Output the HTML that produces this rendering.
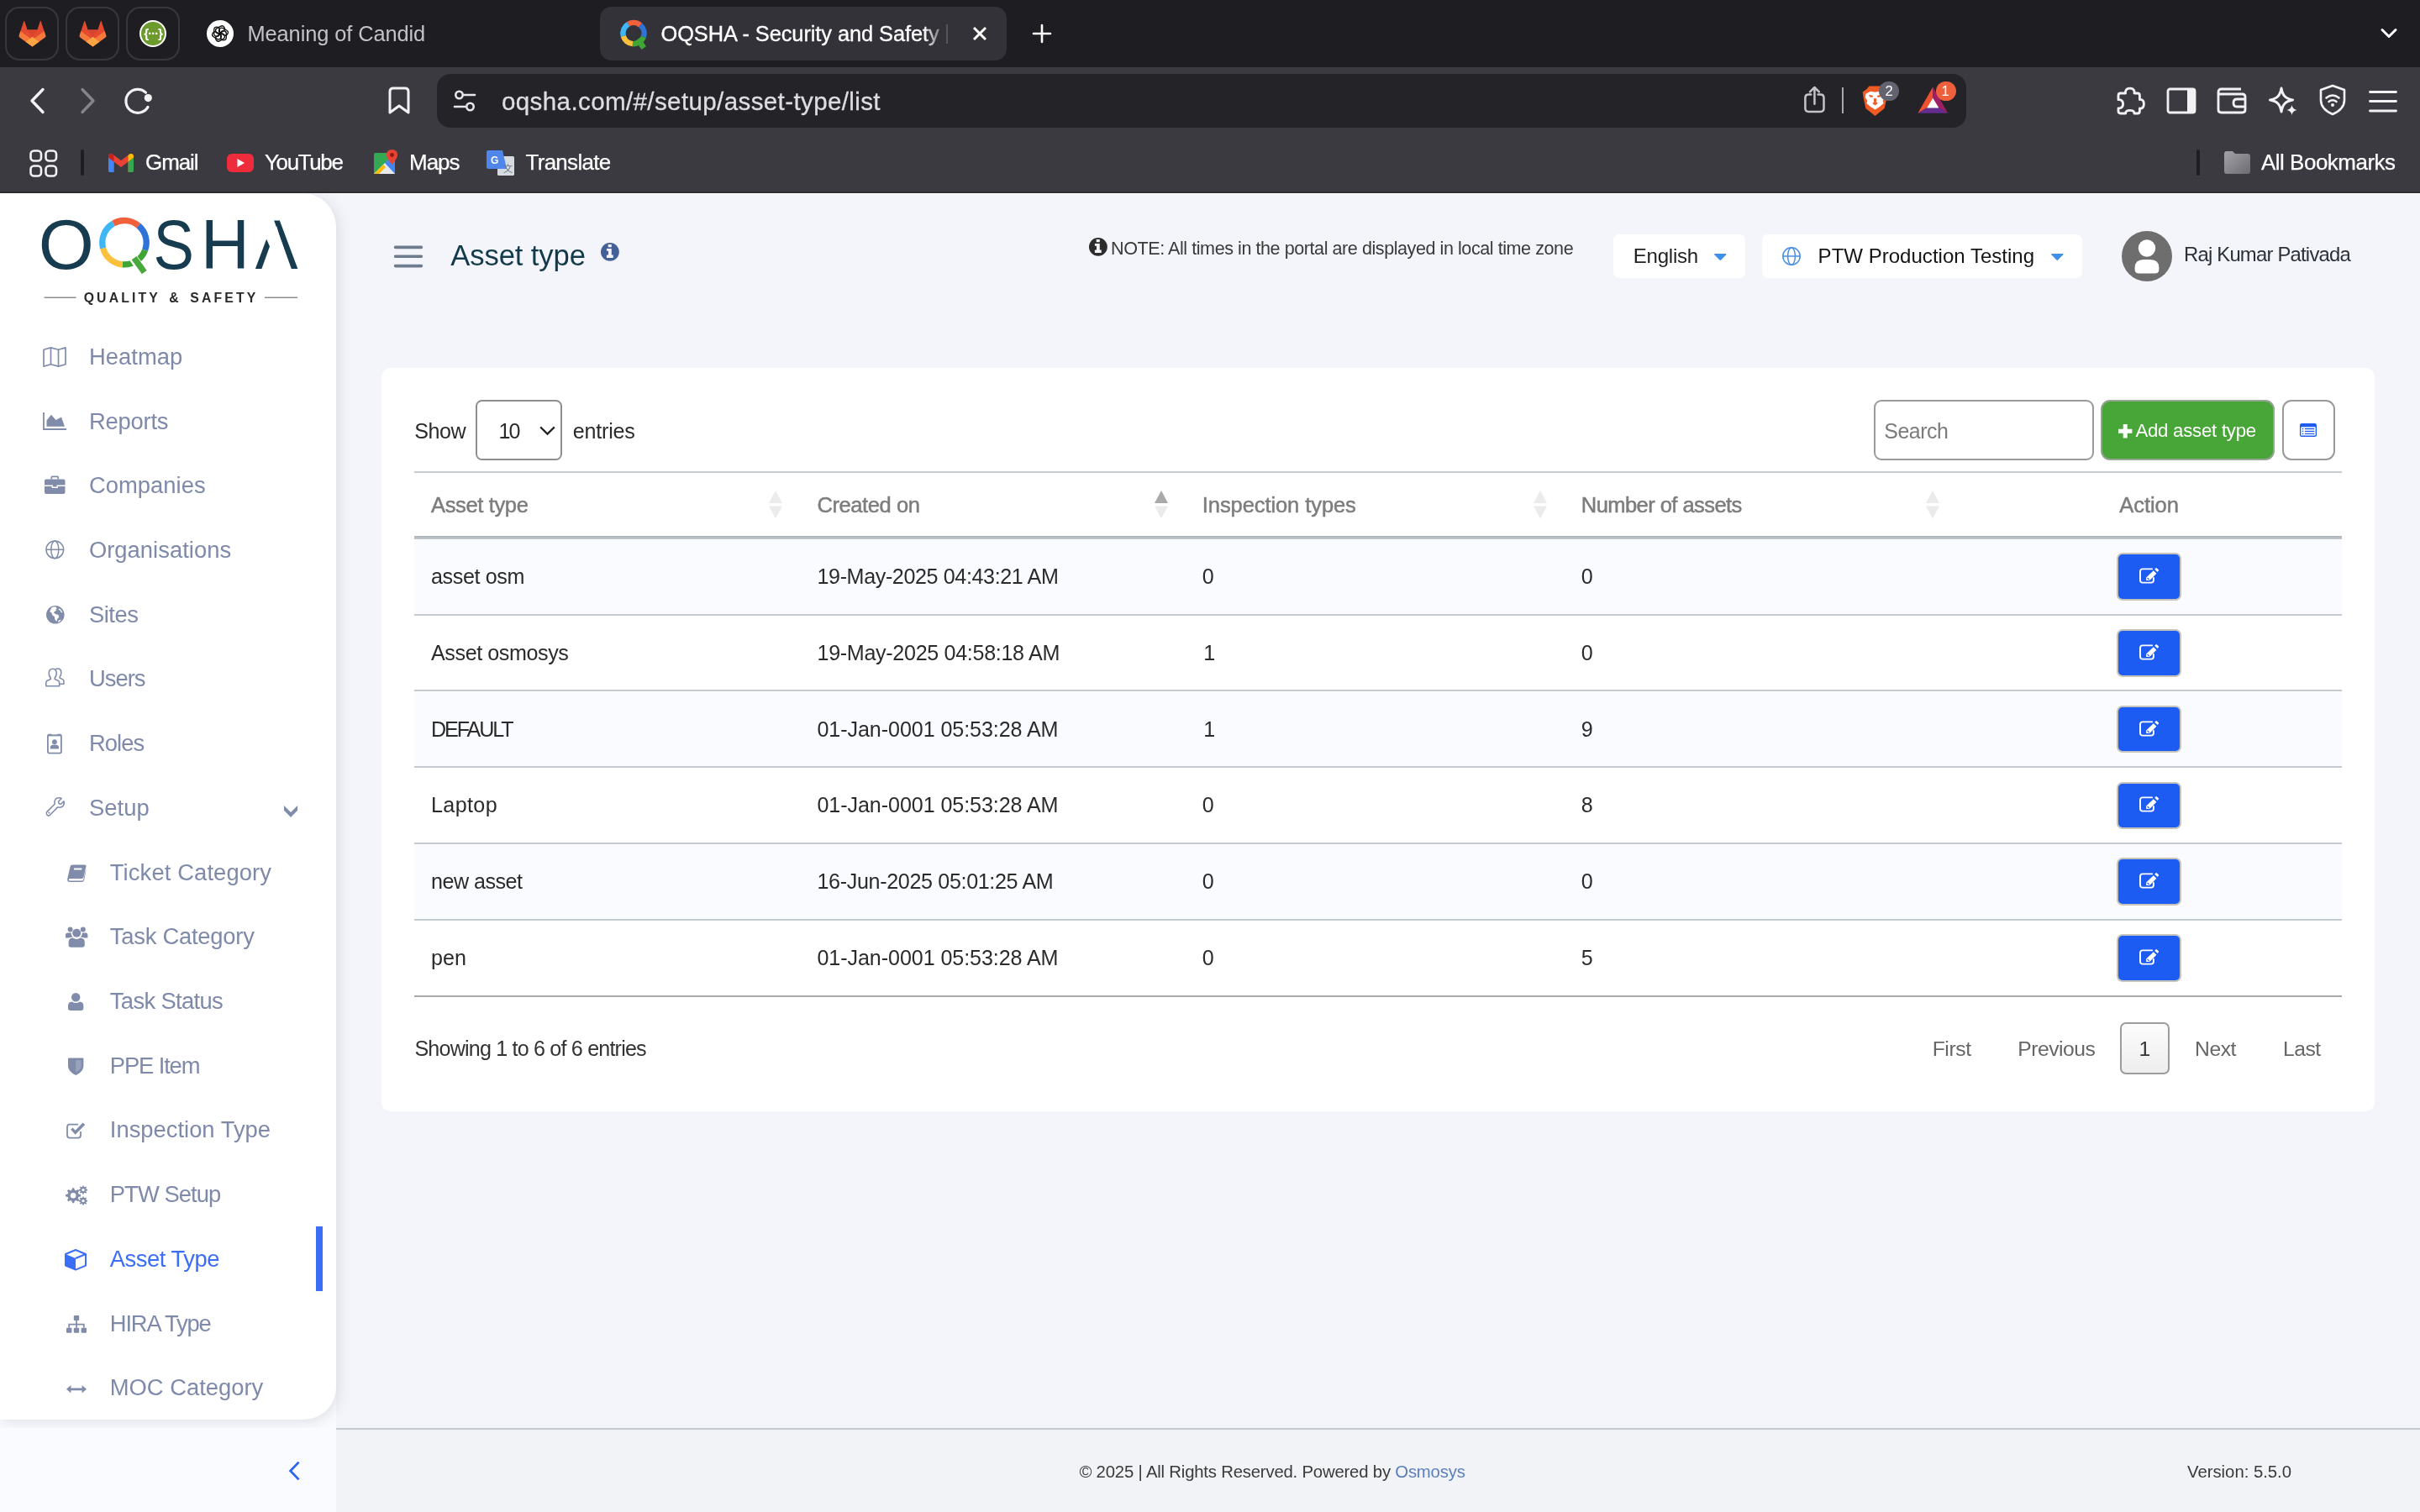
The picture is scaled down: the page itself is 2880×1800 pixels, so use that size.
<!DOCTYPE html>
<html lang="en"><head><meta charset="utf-8"><title>OQSHA - Security and Safety</title>
<style>
*{box-sizing:border-box;margin:0;padding:0}
html,body{width:2880px;height:1800px;overflow:hidden;background:#f4f5fa;font-family:"Liberation Sans",sans-serif}
.t{position:absolute;white-space:nowrap;display:block}
.a{position:absolute;display:block}
svg{position:absolute;display:block;overflow:visible}
#root{position:absolute;left:0;top:0;width:2880px;height:1800px;will-change:transform}

</style></head>
<body>
<div id="root">
<div class="a" style="left:0;top:0;width:2880px;height:80px;background:#1e1d22"></div>
<div class="a" style="left:0;top:80px;width:2880px;height:150px;background:#3b3a40"></div>
<div class="a" style="left:6px;top:8px;width:64px;height:64px;border:2px solid #38373d;border-radius:17px"></div>
<div class="a" style="left:78px;top:8px;width:64px;height:64px;border:2px solid #38373d;border-radius:17px"></div>
<div class="a" style="left:150px;top:8px;width:64px;height:64px;border:2px solid #38373d;border-radius:17px"></div>
<svg style="left:22px;top:24px" width="33" height="32" viewBox="0 0 33 32"><path d="M16.5 31.5 L1.2 20.2 Q0.3 19.4 0.7 18.2 L6.3 1.2 Q6.7 0.2 7.2 1.2 L10.6 11.6 H22.4 L25.8 1.2 Q26.3 0.2 26.7 1.2 L32.3 18.2 Q32.7 19.4 31.8 20.2 Z" fill="#e2492f"/><path d="M16.5 31.5 L1.2 20.2 Q0.3 19.4 0.7 18.2 L2.4 13 L16.5 23.6 L30.6 13 L32.3 18.2 Q32.7 19.4 31.8 20.2 Z" fill="#f5793a"/><path d="M16.5 31.5 L8.6 25.7 L16.5 19.8 L24.4 25.7 Z" fill="#fca542"/><path d="M10.6 11.6 H22.4 L16.5 19.8 Z" fill="#d8452f"/></svg>
<svg style="left:94px;top:24px" width="33" height="32" viewBox="0 0 33 32"><path d="M16.5 31.5 L1.2 20.2 Q0.3 19.4 0.7 18.2 L6.3 1.2 Q6.7 0.2 7.2 1.2 L10.6 11.6 H22.4 L25.8 1.2 Q26.3 0.2 26.7 1.2 L32.3 18.2 Q32.7 19.4 31.8 20.2 Z" fill="#e2492f"/><path d="M16.5 31.5 L1.2 20.2 Q0.3 19.4 0.7 18.2 L2.4 13 L16.5 23.6 L30.6 13 L32.3 18.2 Q32.7 19.4 31.8 20.2 Z" fill="#f5793a"/><path d="M16.5 31.5 L8.6 25.7 L16.5 19.8 L24.4 25.7 Z" fill="#fca542"/><path d="M10.6 11.6 H22.4 L16.5 19.8 Z" fill="#d8452f"/></svg>
<svg style="left:166px;top:24px" width="32" height="32" viewBox="0 0 32 32"><circle cx="16" cy="16" r="15" fill="#6d9a2d" stroke="#fff" stroke-width="2"/><text x="16" y="21.4" text-anchor="middle" font-family="Liberation Sans,sans-serif" font-size="15.5" font-weight="700" fill="#fff" letter-spacing="-1.2">{&#183;&#183;&#183;}</text></svg>
<svg style="left:246px;top:24px" width="32" height="32" viewBox="0 0 32 32"><circle cx="16" cy="16" r="16" fill="#fff"/><g fill="none" stroke="#111" stroke-width="1.35"><rect x="12.70" y="5.80" width="6.6" height="11.2" rx="3.3" transform="rotate(60 16.00 11.40)"/><rect x="16.68" y="8.10" width="6.6" height="11.2" rx="3.3" transform="rotate(120 19.98 13.70)"/><rect x="16.68" y="12.70" width="6.6" height="11.2" rx="3.3" transform="rotate(180 19.98 18.30)"/><rect x="12.70" y="15.00" width="6.6" height="11.2" rx="3.3" transform="rotate(240 16.00 20.60)"/><rect x="8.72" y="12.70" width="6.6" height="11.2" rx="3.3" transform="rotate(300 12.02 18.30)"/><rect x="8.72" y="8.10" width="6.6" height="11.2" rx="3.3" transform="rotate(360 12.02 13.70)"/></g></svg>
<span class="t" style="left:294.5px;top:22.0px;font-size:25.42px;line-height:36px;color:#c3c2c7;font-weight:400;letter-spacing:-0.10px;">Meaning of Candid</span>
<div class="a" style="left:714px;top:8px;width:484px;height:64px;border-radius:14px;background:#333238"></div>
<svg style="left:736px;top:22px" width="36" height="36" viewBox="0 0 36 36"><path d="M11.70 6.69 A12.60 12.60 0 0 1 26.10 7.95" fill="none" stroke="#f0603a" stroke-width="6.40"/><path d="M26.10 7.95 A12.60 12.60 0 0 1 29.84 21.91" fill="none" stroke="#2f72d8" stroke-width="6.40"/><path d="M29.84 21.91 A12.60 12.60 0 0 1 16.90 30.15" fill="none" stroke="#3fa535" stroke-width="6.40"/><path d="M16.90 30.15 A12.60 12.60 0 0 1 5.83 20.86" fill="none" stroke="#fbc13c" stroke-width="6.40"/><path d="M5.83 20.86 A12.60 12.60 0 0 1 11.70 6.69" fill="none" stroke="#3fb6f5" stroke-width="6.40"/><path d="M23.02 24.78 L30.27 35.13" stroke="#3fa535" stroke-width="6.72" fill="none"/></svg>
<span class="t" style="left:786.5px;top:22.0px;font-size:25.42px;line-height:36px;color:#ffffff;font-weight:400;-webkit-text-stroke:0.3px #fff;width:343px;overflow:hidden;-webkit-mask-image:linear-gradient(90deg,#000 312px,transparent 343px);letter-spacing:-0.08px;">OQSHA - Security and Safety</span>
<div class="a" style="left:1126px;top:29px;width:2px;height:23px;background:#56555b"></div>
<svg style="left:1157px;top:31px" width="18" height="18" viewBox="0 0 18 18"><path d="M2 2L16 16M16 2L2 16" stroke="#fff" stroke-width="3" fill="none"/></svg>
<svg style="left:1229px;top:29px" width="22" height="22" viewBox="0 0 22 22"><path d="M11 1V21M1 11H21" stroke="#fff" stroke-width="2.6" fill="none" stroke-linecap="round"/></svg>
<svg style="left:2833px;top:33px" width="20" height="14" viewBox="0 0 20 14"><path d="M2 2.5L10 10.5L18 2.5" stroke="#fff" stroke-width="3" fill="none" stroke-linecap="round" stroke-linejoin="round"/></svg>
<svg style="left:34px;top:103px" width="22" height="34" viewBox="0 0 22 34"><path d="M17 3.5L4 17L17 30.5" stroke="#f2f2f4" stroke-width="3.4" fill="none" stroke-linecap="round" stroke-linejoin="round"/></svg>
<svg style="left:93px;top:103px" width="22" height="34" viewBox="0 0 22 34"><path d="M5 3.5L18 17L5 30.5" stroke="#85848b" stroke-width="3.4" fill="none" stroke-linecap="round" stroke-linejoin="round"/></svg>
<svg style="left:146px;top:102px" width="36" height="36" viewBox="0 0 36 36"><path d="M27.5 8.2 A14 14 0 1 0 30 25.4" stroke="#f2f2f4" stroke-width="3.2" fill="none" stroke-linecap="round"/><circle cx="30.3" cy="14.6" r="4.6" fill="#f2f2f4"/></svg>
<svg style="left:461px;top:103px" width="28" height="34" viewBox="0 0 28 34"><path d="M3 6 Q3 2 7 2 H21 Q25 2 25 6 V31 L14 23 L3 31 Z" stroke="#f2f2f4" stroke-width="3" fill="none" stroke-linejoin="round"/></svg>
<div class="a" style="left:520px;top:88px;width:1820px;height:64px;border-radius:16px;background:#242328"></div>
<div class="a" style="left:0;top:228px;width:2880px;height:2px;background:#2d2c31"></div>
<svg style="left:539px;top:106px" width="28" height="28" viewBox="0 0 28 28"><g stroke="#e6e6ea" stroke-width="2.6" fill="none" stroke-linecap="round"><circle cx="7.5" cy="7" r="4.2"/><path d="M13 7H26"/><circle cx="20.5" cy="21" r="4.2"/><path d="M2 21H15"/></g></svg>
<span class="t" style="left:597.0px;top:99.8px;font-size:29.57px;line-height:41px;color:#dedde2;font-weight:400;-webkit-text-stroke:0.3px #dedde2;letter-spacing:0.37px;">oqsha.com/#/setup/asset-type/list</span>
<svg style="left:2147.3px;top:102.2px" width="25" height="32" viewBox="0 0 25 32"><g stroke="#c4c4c9" stroke-width="2.5" fill="none" stroke-linecap="round" stroke-linejoin="round"><path d="M8.3 10.4H5.3Q1.4 10.4 1.4 14.3V27Q1.4 30.9 5.3 30.9H19.6Q23.5 30.9 23.5 27V14.3Q23.5 10.4 19.6 10.4H16.6"/><path d="M12.45 21.8V2.2M7 7.4L12.45 2L17.9 7.4"/></g></svg>
<div class="a" style="left:2192px;top:104px;width:2px;height:31px;background:#a9a8ae"></div>
<svg style="left:2215.6px;top:102px" width="31" height="36" viewBox="0 0 31 36"><path d="M8.6 0.4H22.4L26 4.4L30.3 7.4L29.1 16L26.6 27L15.5 35.9L4.4 27L1.9 16L0.7 7.4L5 4.4Z" fill="#f15a22"/><path d="M4.6 9.6L10.4 6.7L15.5 7.7L20.6 6.7L26.4 9.6L27.2 14L24.6 18L25.6 21L21 25L15.5 28.6L10 25L5.4 21L6.4 18L3.8 14Z" fill="#fff"/><path d="M8.2 10.8L13.2 12L12.2 14L9 13.2ZM22.8 10.8L17.8 12L18.8 14L22 13.2ZM13.8 15.2H17.2L16.8 19.4L18.8 21L15.5 23.4L12.2 21L14.2 19.4Z" fill="#f15a22"/></svg>
<div class="a" style="left:2236.4px;top:96.6px;width:23.8px;height:23.8px;border-radius:12px;background:#62636f"></div>
<span class="t" style="left:2243.4px;top:97.1px;font-size:16.6px;line-height:23px;color:#fff;font-weight:400;">2</span>
<svg style="left:2281.5px;top:103px" width="36.6" height="32" viewBox="0 0 36.6 32"><path d="M18.3 0.4L0.4 31.8L18.3 21Z" fill="#f0502f"/><path d="M18.3 0.4L36.2 31.8L18.3 21Z" fill="#9e1f63"/><path d="M0.4 31.8H36.2L18.3 21Z" fill="#662d91"/><path d="M18.3 13.8L25.4 25.6H11.2Z" fill="#fff"/></svg>
<div class="a" style="left:2304px;top:96.6px;width:23.8px;height:23.8px;border-radius:12px;background:#ee5f3c"></div>
<span class="t" style="left:2310.6px;top:97.1px;font-size:16.6px;line-height:23px;color:#fff;font-weight:400;">1</span>
<svg style="left:2518px;top:102px" width="36" height="36" viewBox="0 0 36 36"><path d="M5.5 9H11.6C11.6 9 10.3 3.2 16.8 3.2C23.3 3.2 22 9 22 9H25.9Q28.4 9 28.4 11.5V16.6C28.4 16.6 33.4 15.3 33.4 21.8C33.4 28.3 28.4 27 28.4 27V30.5Q28.4 33 25.9 33H21.9C21.9 33 22.7 29.4 16.8 29.4C10.9 29.4 11.7 33 11.7 33H5.5Q3 33 3 30.5V26.9C3 26.9 8.6 27.7 8.6 21.8C8.6 15.9 3 16.7 3 16.7V11.5Q3 9 5.5 9Z" stroke="#f2f2f4" stroke-width="2.8" fill="none" stroke-linejoin="round"/></svg>
<svg style="left:2578px;top:104px" width="36" height="32" viewBox="0 0 36 32"><rect x="2" y="2" width="32" height="28" rx="2.6" stroke="#f2f2f4" stroke-width="2.8" fill="none"/><path d="M25 2H31.4Q34 2 34 4.6V27.4Q34 30 31.4 30H25Z" fill="#f2f2f4"/></svg>
<svg style="left:2638px;top:104px" width="36" height="32" viewBox="0 0 36 32"><g stroke="#f2f2f4" stroke-width="2.8" fill="none" stroke-linejoin="round"><path d="M2 8V26.5Q2 30 5.5 30H30.5Q34 30 34 26.5V11.5Q34 8 30.5 8H2V5.5Q2 2 5.5 2H29"/><path d="M34 14H24Q20 14 20 18.5Q20 23 24 23H34"/></g></svg>
<svg style="left:2699px;top:102px" width="36" height="36" viewBox="0 0 36 36"><path d="M16 3 C17.5 12 21 15.5 29.5 17 C21 18.5 17.5 22 16 31 C14.5 22 11 18.5 2.5 17 C11 15.5 14.5 12 16 3 Z" stroke="#f2f2f4" stroke-width="3" fill="none" stroke-linejoin="round"/><path d="M28.5 23 Q29.3 28 34.5 29 Q29.3 30 28.5 35 Q27.7 30 22.5 29 Q27.7 28 28.5 23 Z" fill="#f2f2f4"/></svg>
<svg style="left:2760px;top:100px" width="32" height="38" viewBox="0 0 32 38"><g stroke="#f2f2f4" stroke-width="2.6" fill="none" stroke-linecap="round" stroke-linejoin="round"><path d="M16 2 L30 7 V19 Q30 30 16 36 Q2 30 2 19 V7 Z"/><path d="M8.5 16.5 Q16 10.5 23.5 16.5"/><path d="M11.5 21 Q16 17.5 20.5 21"/></g><circle cx="16" cy="25" r="2" fill="#f2f2f4"/></svg>
<svg style="left:2819px;top:107px" width="34" height="28" viewBox="0 0 34 28"><path d="M1.5 2.5H32.5M1.5 13.5H32.5M1.5 25H32.5" stroke="#f2f2f4" stroke-width="2.8" stroke-linecap="round"/></svg>
<svg style="left:35px;top:178px" width="34" height="33" viewBox="0 0 34 33"><g stroke="#f2f2f4" stroke-width="2.6" fill="none"><rect x="1.5" y="1.5" width="12.5" height="12" rx="4"/><rect x="19.5" y="1.5" width="12.5" height="12" rx="4"/><rect x="1.5" y="19.5" width="12.5" height="12" rx="4"/><rect x="19.5" y="19.5" width="12.5" height="12" rx="4"/></g></svg>
<div class="a" style="left:96px;top:178px;width:4px;height:31px;border-radius:2px;background:#1e1d22"></div>
<svg style="left:129px;top:183px" width="30" height="22" viewBox="0 0 30 22"><path d="M0 3.5V20Q0 22 2 22H6.5V9.5L15 16L23.5 9.5V22H28Q30 22 30 20V3.5Q30 0 26.8 0Q25.6 0 24.5 1L15 8L5.5 1Q4.4 0 3.2 0Q0 0 0 3.5Z" fill="#ea4335"/><path d="M0 3.5V20Q0 22 2 22H6.5V9.5L0 4.5Z" fill="#4285f4"/><path d="M23.5 9.5V22H28Q30 22 30 20V4.5Z" fill="#34a853"/><path d="M23.5 2V9.5L30 4.5V3.5Q30 0 26.8 0Q25.6 0 24.5 1Z" fill="#fbbc04"/><path d="M0 3.5V4.5L6.5 9.5V2L5.5 1Q4.4 0 3.2 0Q0 0 0 3.5Z" fill="#c5221f"/></svg>
<span class="t" style="left:173.0px;top:175.0px;font-size:25.94px;line-height:36px;color:#fff;font-weight:400;-webkit-text-stroke:0.25px #fff;letter-spacing:-1.05px;">Gmail</span>
<svg style="left:270px;top:183px" width="32" height="22" viewBox="0 0 32 22"><rect width="32" height="22" rx="6" fill="#ee2c3c"/><path d="M12.5 6L21 11L12.5 16Z" fill="#fff"/></svg>
<span class="t" style="left:315.0px;top:175.0px;font-size:25.94px;line-height:36px;color:#fff;font-weight:400;-webkit-text-stroke:0.25px #fff;letter-spacing:-1.35px;">YouTube</span>
<svg style="left:444px;top:178px" width="30" height="30" viewBox="0 0 30 30"><rect x="1" y="4" width="25" height="25" rx="2" fill="#34a853"/><path d="M1 29L26 4V29Z" fill="#4285f4"/><path d="M1 29 L14 16 L26 29 Z" fill="#e8eaed"/><path d="M1 29L12 18L15 21L7 29Z" fill="#fbbc04"/><path d="M26 4V29H24L12 17Z" fill="#c9d3e8" opacity=".0"/><path d="M22.5 0Q29 0.3 29 6.5Q29 10.5 22.5 18Q16 10.5 16 6.5Q16 0.3 22.5 0Z" fill="#ea4335"/><circle cx="22.5" cy="6.5" r="2.4" fill="#8b1a12"/></svg>
<span class="t" style="left:487.0px;top:175.0px;font-size:25.94px;line-height:36px;color:#fff;font-weight:400;-webkit-text-stroke:0.25px #fff;letter-spacing:-0.98px;">Maps</span>
<svg style="left:579px;top:178px" width="34" height="32" viewBox="0 0 34 32"><rect x="13" y="8" width="20" height="23" rx="1.5" fill="#d6dae1"/><path d="M2 1H19L24 23H2Q0 23 0 21V3Q0 1 2 1Z" fill="#4f86ec"/><text x="5" y="17" font-family="Liberation Sans,sans-serif" font-weight="700" font-size="12" fill="#fff">G</text><text x="20" y="27" font-family="Liberation Sans,Noto Sans CJK SC,sans-serif" font-size="11" fill="#6b7280">文</text></svg>
<span class="t" style="left:625.5px;top:175.0px;font-size:25.94px;line-height:36px;color:#fff;font-weight:400;-webkit-text-stroke:0.25px #fff;letter-spacing:-0.69px;">Translate</span>
<div class="a" style="left:2614px;top:178px;width:4px;height:31px;border-radius:2px;background:#1e1d22"></div>
<svg style="left:2647px;top:180px" width="31" height="27" viewBox="0 0 31 27"><defs><linearGradient id="fg" x1="0" y1="0" x2="1" y2="1"><stop offset="0" stop-color="#a3a3a8"/><stop offset="1" stop-color="#6b6b71"/></linearGradient></defs><path d="M0 3Q0 0 3 0H10L13 3H28Q31 3 31 6V24Q31 27 28 27H3Q0 27 0 24Z" fill="url(#fg)"/></svg>
<span class="t" style="left:2691.0px;top:175.0px;font-size:25.94px;line-height:36px;color:#fff;font-weight:400;-webkit-text-stroke:0.25px #fff;letter-spacing:-0.48px;">All Bookmarks</span>
<div class="a" style="left:400px;top:1702px;width:2480px;height:98px;background:#f2f3f6"></div>
<div class="a" style="left:0;top:1640px;width:400px;height:160px;background:#fafbfe"></div>
<div class="a" style="left:366px;top:229.5px;width:2514px;height:1.6px;background:rgba(255,255,255,.85)"></div>
<div class="a" style="left:0;top:230px;width:400px;height:1460px;background:#fff;border-radius:0 40px 38px 0;box-shadow:2px 3px 16px rgba(80,88,110,.17);clip-path:inset(0 -80px -80px 0)"></div>
<div class="a" style="left:0;top:1700px;width:400px;height:100px;background:#fafbfe"></div>
<svg style="left:0;top:230px" width="400" height="150" viewBox="0 230 400 150"><g font-family="Liberation Sans,sans-serif" font-size="82.5" fill="#173b4f" text-anchor="middle"><text x="78.8" y="319.9" transform="translate(78.8 0) scale(1.03 1) translate(-78.8 0)">O</text><text x="206.8" y="319.9" transform="translate(206.8 0) scale(0.88 1) translate(-206.8 0)">S</text><text x="267.8" y="320" transform="translate(267.8 320) scale(0.97 1.01) translate(-267.8 -320)">H</text><text x="329.2" y="320" transform="translate(329.2 320) scale(0.93 1.01) translate(-329.2 -320)">&#923;</text></g><path d="M300 258 L324.6 258 L338.5 298 L323 298 L315.5 281 L300 281 Z" fill="#fff"/><path d="M134.90 266.01 A26.20 26.20 0 0 1 164.84 268.63" fill="none" stroke="#f0603a" stroke-width="7.30"/><path d="M164.84 268.63 A26.20 26.20 0 0 1 172.62 297.66" fill="none" stroke="#2f72d8" stroke-width="7.30"/><path d="M172.62 297.66 A26.20 26.20 0 0 1 145.72 314.80" fill="none" stroke="#3fa535" stroke-width="7.30"/><path d="M145.72 314.80 A26.20 26.20 0 0 1 122.69 295.48" fill="none" stroke="#fbc13c" stroke-width="7.30"/><path d="M122.69 295.48 A26.20 26.20 0 0 1 134.90 266.01" fill="none" stroke="#3fb6f5" stroke-width="7.30"/><path d="M158.8 307.5 L171.4 324.6" stroke="#fff" stroke-width="10.5" fill="none"/><path d="M159.6 307.2 L171.8 324.2" stroke="#48a83b" stroke-width="7.2" fill="none"/><path d="M52.5 354.3H90.5M315 354.3H354" stroke="#8d8d8d" stroke-width="1.6"/></svg>
<span class="t" style="left:99.7px;top:343.6px;font-size:15.77px;line-height:22px;color:#2a2a2a;font-weight:700;word-spacing:3px;letter-spacing:3.15px;">QUALITY &amp; SAFETY</span>
<span class="t" style="left:105.9px;top:405.8px;font-size:27.39px;line-height:38px;color:#7f8aab;font-weight:400;letter-spacing:0.05px;">Heatmap</span>
<span class="t" style="left:105.9px;top:482.5px;font-size:27.39px;line-height:38px;color:#7f8aab;font-weight:400;letter-spacing:-0.21px;">Reports</span>
<span class="t" style="left:105.9px;top:559.2px;font-size:27.39px;line-height:38px;color:#7f8aab;font-weight:400;letter-spacing:0.04px;">Companies</span>
<span class="t" style="left:105.9px;top:635.9px;font-size:27.39px;line-height:38px;color:#7f8aab;font-weight:400;letter-spacing:0.03px;">Organisations</span>
<span class="t" style="left:105.9px;top:712.6px;font-size:27.39px;line-height:38px;color:#7f8aab;font-weight:400;letter-spacing:-0.43px;">Sites</span>
<span class="t" style="left:105.9px;top:789.3px;font-size:27.39px;line-height:38px;color:#7f8aab;font-weight:400;letter-spacing:-0.96px;">Users</span>
<span class="t" style="left:105.9px;top:866.1px;font-size:27.39px;line-height:38px;color:#7f8aab;font-weight:400;letter-spacing:-0.94px;">Roles</span>
<span class="t" style="left:105.9px;top:942.8px;font-size:27.39px;line-height:38px;color:#7f8aab;font-weight:400;letter-spacing:0.09px;">Setup</span>
<span class="t" style="left:130.8px;top:1019.5px;font-size:27.39px;line-height:38px;color:#7f8aab;font-weight:400;letter-spacing:0.11px;">Ticket Category</span>
<span class="t" style="left:130.8px;top:1096.2px;font-size:27.39px;line-height:38px;color:#7f8aab;font-weight:400;letter-spacing:-0.24px;">Task Category</span>
<span class="t" style="left:130.8px;top:1173.0px;font-size:27.39px;line-height:38px;color:#7f8aab;font-weight:400;letter-spacing:-0.65px;">Task Status</span>
<span class="t" style="left:130.8px;top:1249.7px;font-size:27.39px;line-height:38px;color:#7f8aab;font-weight:400;letter-spacing:-1.13px;">PPE Item</span>
<span class="t" style="left:130.8px;top:1326.4px;font-size:27.39px;line-height:38px;color:#7f8aab;font-weight:400;letter-spacing:-0.00px;">Inspection Type</span>
<span class="t" style="left:130.8px;top:1403.1px;font-size:27.39px;line-height:38px;color:#7f8aab;font-weight:400;letter-spacing:-0.95px;">PTW Setup</span>
<span class="t" style="left:130.8px;top:1479.8px;font-size:27.39px;line-height:38px;color:#3b6ef5;font-weight:400;letter-spacing:-0.48px;">Asset Type</span>
<span class="t" style="left:130.8px;top:1556.5px;font-size:27.39px;line-height:38px;color:#7f8aab;font-weight:400;letter-spacing:-1.17px;">HIRA Type</span>
<span class="t" style="left:130.8px;top:1633.3px;font-size:27.39px;line-height:38px;color:#7f8aab;font-weight:400;letter-spacing:-0.01px;">MOC Category</span>
<svg style="left:51.0px;top:413.2px" width="28.0" height="24.0" viewBox="0 0 28 24"><g fill="none" stroke="#818cab" stroke-width="1.7" stroke-linejoin="round"><path d="M1 3.2L9.5 0.9L18.5 3.2L27 0.9V20.8L18.5 23.1L9.5 20.8L1 23.1Z"/><path d="M9.5 0.9V20.8M18.5 3.2V23.1"/></g></svg>
<svg style="left:51.0px;top:491.4px" width="28.0" height="21.0" viewBox="0 0 28 21"><path d="M1 0V20H28" fill="none" stroke="#818cab" stroke-width="1.8"/><path d="M4.5 16.8V9.5L10 2.8L15.5 9L22 5.5L26 16.8Z" fill="#818cab"/></svg>
<svg style="left:53.0px;top:567.3px" width="24.5" height="21.0" viewBox="0 0 24.5 21"><path d="M8.3 3.6V1.2Q8.3 0.4 9.1 0.4H15.4Q16.2 0.4 16.2 1.2V3.6" fill="none" stroke="#818cab" stroke-width="1.7"/><path d="M0 5.6Q0 3.6 2 3.6H22.5Q24.5 3.6 24.5 5.6V10.6H14.6V12.6H9.9V10.6H0Z" fill="#818cab"/><path d="M0 12H8.6V14H15.9V12H24.5V19Q24.5 21 22.5 21H2Q0 21 0 19Z" fill="#818cab"/></svg>
<svg style="left:54.0px;top:642.6px" width="22.6" height="22.6" viewBox="0 0 24 24"><g fill="none" stroke="#818cab" stroke-width="1.6"><circle cx="12" cy="12" r="11"/><ellipse cx="12" cy="12" rx="4.8" ry="11"/><path d="M1 12H23"/></g></svg>
<svg style="left:54.5px;top:721.3px" width="21.6" height="21.6" viewBox="0 0 21.6 21.6"><circle cx="10.8" cy="10.8" r="10.8" fill="#818cab"/><path d="M6.2 2.6Q8.5 1.2 11.4 1.4L13 3.4L11.2 4.2L12.4 6L10.2 6.4L9 8.6L11.5 10.2L14.2 10.8L15.4 13.4L13 16.2L12.2 19.2L10.2 16L9.8 13L7.4 11.4L6.4 8.6L4.2 7.2Z M15.5 3.2Q18.6 5 19.6 8.2L17.6 8L16.6 5.6L14.6 5Z M14.6 17.6L18.2 16.6Q16.6 19.2 14 20Z" fill="#fff"/></svg>
<svg style="left:54.0px;top:795.4px" width="22.8" height="23.0" viewBox="0 0 23.5 23.2"><g fill="none" stroke="#818cab" stroke-width="1.6" stroke-linejoin="round"><path d="M9 1Q13.6 1 13.6 6.2Q13.6 10.4 11.6 12V13.6L15.6 15.4Q17.2 16.2 17.2 18.2V22.2H0.8V18.2Q0.8 16.2 2.4 15.4L6.4 13.6V12Q4.4 10.4 4.4 6.2Q4.4 1 9 1Z"/><path d="M12.4 1.6Q13.6 0.8 15 0.8Q19.4 0.8 19.4 5.6Q19.4 9.2 17.6 10.8V12.2L21 13.8Q22.6 14.6 22.6 16.4V19.6H17.4"/></g></svg>
<svg style="left:56.2px;top:873.1px" width="17.8" height="24.6" viewBox="0 0 17.8 24.6"><rect x="0.9" y="1.6" width="16" height="22" rx="1.8" fill="none" stroke="#818cab" stroke-width="1.8"/><path d="M0.9 1.2H16.9V3.4H0.9Z" fill="#818cab"/><path d="M5.6 0H12.2V1.4H5.6Z" fill="#fff"/><circle cx="8.9" cy="10.2" r="2.9" fill="#818cab"/><path d="M3.8 18.6V16.6Q3.8 13.6 8.9 13.6Q14 13.6 14 16.6V18.6Z" fill="#818cab"/></svg>
<svg style="left:53.8px;top:948.8px" width="23.0" height="23.0" viewBox="0 0 24 24"><path d="M14.2 1.2Q17.4 0.2 20 1.6L16.2 5.4L16.8 8L19.4 8.6L23 5Q24 8 22.2 10.6Q19.6 13.6 15.4 12.4L5.6 22.2Q3.8 23.6 2 22Q0.4 20.2 1.8 18.4L11.6 8.6Q10.6 3.6 14.2 1.2Z" fill="none" stroke="#818cab" stroke-width="1.6" stroke-linejoin="round"/><circle cx="4.6" cy="19.4" r="1.1" fill="#818cab"/></svg>
<svg style="left:338.0px;top:959.0px" width="16.2" height="14.0" viewBox="0 0 16.2 14"><path d="M0 0L8.05 8L16.1 0V5.8L8.05 13.9L0 5.8Z" fill="#818cab"/></svg>
<svg style="left:79.5px;top:1029.2px" width="23.0" height="21.2" viewBox="0 0 23 21.2"><path d="M6.2 0.4H20.6Q23 0.4 22.4 2.8L19.4 15.6Q19 17 17.4 17H3Q1.6 17.2 1.8 18.4Q2 19.4 3.2 19.4H17.6Q18.8 19.4 19.2 18.2L22.4 5.6L22.2 8.6L20.2 18.6Q19.8 21 17.6 21H3Q0 21 0.2 17.8Q0.2 16.8 0.6 15.4L3.6 2.6Q4 0.4 6.2 0.4Z" fill="#818cab"/><path d="M8.2 4.6H17.6L17.2 6.4H7.8Z" fill="#fff"/></svg>
<svg style="left:77.8px;top:1103.3px" width="26.4" height="24.8" viewBox="0 0 26.4 24.8"><g fill="#818cab"><circle cx="5.6" cy="3.6" r="3"/><circle cx="20.8" cy="3.6" r="3"/><circle cx="13.2" cy="7.8" r="5"/><path d="M0 13.4V9.8Q0 7.6 2.2 7.4H6.6Q6.4 10.6 8.4 12.6Q5 13 4 13.4Z"/><path d="M26.4 13.4V9.8Q26.4 7.6 24.2 7.4H19.8Q20 10.6 18 12.6Q21.4 13 22.4 13.4Z"/><path d="M3.6 21.8V18.8Q3.6 13.8 8.6 13.6Q10.6 15 13.2 15Q15.8 15 17.8 13.6Q22.8 13.8 22.8 18.8V21.8Q22.8 24.8 19.8 24.8H6.6Q3.6 24.8 3.6 21.8Z"/></g></svg>
<svg style="left:81.4px;top:1181.8px" width="18.4" height="21.0" viewBox="0 0 18.4 21"><g fill="#818cab"><circle cx="9.2" cy="5.2" r="5.2"/><path d="M0 18V15.4Q0 10.6 4.6 10.4Q6.6 12 9.2 12Q11.8 12 13.8 10.4Q18.4 10.6 18.4 15.4V18Q18.4 21 15.4 21H3Q0 21 0 18Z"/></g></svg>
<svg style="left:81.4px;top:1258.7px" width="18.4" height="21.0" viewBox="0 0 18.4 21"><path d="M0.6 0.4H17.8Q18.4 0.4 18.4 1V10.2Q18.4 16.6 9.2 21Q0 16.6 0 10.2V1Q0 0.4 0.6 0.4Z" fill="#818cab"/><path d="M9.2 3.2H15.6V10.2Q15.6 14.4 9.2 17.8Z" fill="#98a2bd"/></svg>
<svg style="left:79.4px;top:1336.0px" width="22.6" height="19.6" viewBox="0 0 22.6 19.6"><path d="M17 11V15.6Q17 18.6 14 18.6H4Q1 18.6 1 15.6V5.6Q1 2.6 4 2.6H14" fill="none" stroke="#818cab" stroke-width="1.8"/><path d="M5.2 8.8L7.6 6.6L10.6 9.8L19.6 0.6L22.2 3L10.6 14.8Z" fill="#818cab"/></svg>
<svg style="left:77.8px;top:1411.0px" width="26.4" height="24.4" viewBox="0 0 26.4 24.4"><path d="M18.15 11.24 L18.15 13.16 L15.43 14.07 L14.90 15.36 L16.18 17.92 L14.82 19.28 L12.26 18.00 L10.97 18.53 L10.06 21.25 L8.14 21.25 L7.23 18.53 L5.94 18.00 L3.38 19.28 L2.02 17.92 L3.30 15.36 L2.77 14.07 L0.05 13.16 L0.05 11.24 L2.77 10.33 L3.30 9.04 L2.02 6.48 L3.38 5.12 L5.94 6.40 L7.23 5.87 L8.14 3.15 L10.06 3.15 L10.97 5.87 L12.26 6.40 L14.82 5.12 L16.18 6.48 L14.90 9.04 L15.43 10.33Z M5.80 12.20 a3.30 3.30 0 1 0 6.60 0 a3.30 3.30 0 1 0 -6.60 0Z" fill="#818cab" fill-rule="evenodd"/><path d="M26.17 5.05 L26.17 6.15 L24.55 6.65 L24.25 7.37 L25.05 8.87 L24.27 9.65 L22.77 8.85 L22.05 9.15 L21.55 10.77 L20.45 10.77 L19.95 9.15 L19.23 8.85 L17.73 9.65 L16.95 8.87 L17.75 7.37 L17.45 6.65 L15.83 6.15 L15.83 5.05 L17.45 4.55 L17.75 3.83 L16.95 2.33 L17.73 1.55 L19.23 2.35 L19.95 2.05 L20.45 0.43 L21.55 0.43 L22.05 2.05 L22.77 2.35 L24.27 1.55 L25.05 2.33 L24.25 3.83 L24.55 4.55Z M19.30 5.60 a1.70 1.70 0 1 0 3.40 0 a1.70 1.70 0 1 0 -3.40 0Z" fill="#818cab" fill-rule="evenodd"/><path d="M26.17 18.05 L26.17 19.15 L24.55 19.65 L24.25 20.37 L25.05 21.87 L24.27 22.65 L22.77 21.85 L22.05 22.15 L21.55 23.77 L20.45 23.77 L19.95 22.15 L19.23 21.85 L17.73 22.65 L16.95 21.87 L17.75 20.37 L17.45 19.65 L15.83 19.15 L15.83 18.05 L17.45 17.55 L17.75 16.83 L16.95 15.33 L17.73 14.55 L19.23 15.35 L19.95 15.05 L20.45 13.43 L21.55 13.43 L22.05 15.05 L22.77 15.35 L24.27 14.55 L25.05 15.33 L24.25 16.83 L24.55 17.55Z M19.30 18.60 a1.70 1.70 0 1 0 3.40 0 a1.70 1.70 0 1 0 -3.40 0Z" fill="#818cab" fill-rule="evenodd"/></svg>
<svg style="left:76.8px;top:1486.5px" width="26.0" height="25.6" viewBox="0 0 26 25.6"><path d="M13 1L25 6V19.6L13 24.6L1 19.6V6Z" fill="none" stroke="#3b6ef5" stroke-width="2" stroke-linejoin="round"/><path d="M1 6L13 11V24.6L1 19.6Z" fill="#3b6ef5"/><path d="M13 11L25 6" stroke="#3b6ef5" stroke-width="2"/></svg>
<div class="a" style="left:376px;top:1460px;width:8px;height:77px;background:#3b6ef5"></div>
<svg style="left:78.8px;top:1565.6px" width="24.0" height="20.8" viewBox="0 0 24 20.8"><g fill="#818cab"><rect x="8.8" y="0" width="6.4" height="6" rx="1"/><rect x="0" y="14.8" width="6.4" height="6" rx="1"/><rect x="8.8" y="14.8" width="6.4" height="6" rx="1"/><rect x="17.6" y="14.8" width="6.4" height="6" rx="1"/></g><path d="M12 6V14.8M3.2 14.8V10.6H20.8V14.8" fill="none" stroke="#818cab" stroke-width="1.7"/></svg>
<svg style="left:78.8px;top:1648.9px" width="24.0" height="9.6" viewBox="0 0 24 9.6"><path d="M0 4.8L5.4 0V3.4H18.6V0L24 4.8L18.6 9.6V6.2H5.4V9.6Z" fill="#818cab"/></svg>
<svg style="left:342.5px;top:1738.5px" width="15.0" height="24.0" viewBox="0 0 15 24"><path d="M12.6 1.6L2.6 12L12.6 22.4" fill="none" stroke="#2d64f1" stroke-width="2.8" stroke-linejoin="miter"/></svg>
<svg style="left:467.0px;top:291.5px" width="38.0" height="27.0" viewBox="0 0 38 27"><path d="M3.6 2.4H34.4M3.6 13.3H34.4M3.6 24.6H34.4" stroke="#6e7b8d" stroke-width="3.6" stroke-linecap="round"/></svg>
<span class="t" style="left:536.3px;top:279.9px;font-size:34.66px;line-height:49px;color:#133a4a;font-weight:400;letter-spacing:-0.13px;">Asset type</span>
<svg style="left:715.1px;top:289.1px" width="21.8" height="21.8" viewBox="0 0 22 22"><circle cx="11" cy="11" r="11" fill="#436098"/><path d="M8.8 2H12.9V5.4H8.8ZM7 7H12.9V14.7H14.9V18.1H7V14.7H9.1V9.9H7Z" fill="#f4f5fa"/></svg>
<svg style="left:1295.5px;top:282.9px" width="21.8" height="21.8" viewBox="0 0 22 22"><circle cx="11" cy="11" r="11" fill="#2d2d2d"/><path d="M8.8 2H12.9V5.4H8.8ZM7 7H12.9V14.7H14.9V18.1H7V14.7H9.1V9.9H7Z" fill="#f4f5fa"/></svg>
<span class="t" style="left:1322.0px;top:280.6px;font-size:21.58px;line-height:30px;color:#3a3a3a;font-weight:400;letter-spacing:-0.45px;">NOTE: All times in the portal are displayed in local time zone</span>
<div class="a" style="left:1920px;top:279px;width:157px;height:51.5px;border-radius:7px;background:#fff"></div>
<span class="t" style="left:1943.8px;top:288.3px;font-size:24.07px;line-height:34px;color:#222;font-weight:400;letter-spacing:-0.27px;">English</span>
<svg style="left:2040.0px;top:301.6px" width="14.6" height="8.2" viewBox="0 0 14.6 8.2"><path d="M0.8 0H13.8Q14.8 0.3 14.2 1.2L8.2 7.6Q7.3 8.3 6.4 7.6L0.4 1.2Q-0.2 0.3 0.8 0Z" fill="#3f8fe8"/></svg>
<div class="a" style="left:2097px;top:279px;width:381px;height:51.5px;border-radius:7px;background:#fff"></div>
<svg style="left:2120.6px;top:293.6px" width="22.0" height="22.0" viewBox="0 0 22 22"><g fill="none" stroke="#4a90e2" stroke-width="1.5"><circle cx="11" cy="11" r="10.2"/><ellipse cx="11" cy="11" rx="4.4" ry="10.2"/><path d="M0.8 11H21.2"/></g></svg>
<span class="t" style="left:2163.6px;top:288.3px;font-size:24.07px;line-height:34px;color:#151515;font-weight:400;letter-spacing:-0.01px;">PTW Production Testing</span>
<svg style="left:2441.2px;top:301.6px" width="14.6" height="8.2" viewBox="0 0 14.6 8.2"><path d="M0.8 0H13.8Q14.8 0.3 14.2 1.2L8.2 7.6Q7.3 8.3 6.4 7.6L0.4 1.2Q-0.2 0.3 0.8 0Z" fill="#3f8fe8"/></svg>
<svg style="left:2525.0px;top:274.6px" width="60.0" height="60.0" viewBox="0 0 60 60"><circle cx="30" cy="30" r="30" fill="#6e6e6e"/><circle cx="30" cy="20.5" r="10.2" fill="#fff"/><path d="M15.6 45.4V44Q15.6 34 26 34H34Q44.4 34 44.4 44V45.4Q44.4 50.6 39.2 50.6H20.8Q15.6 50.6 15.6 45.4Z" fill="#fff"/></svg>
<span class="t" style="left:2599.0px;top:286.4px;font-size:23.87px;line-height:33px;color:#2c3038;font-weight:400;letter-spacing:-0.79px;">Raj Kumar Pativada</span>
<div class="a" style="left:454px;top:437.5px;width:2372px;height:885px;border-radius:11px;background:#fff"></div>
<span class="t" style="left:493.3px;top:495.8px;font-size:25.11px;line-height:35px;color:#2b2b2b;font-weight:400;letter-spacing:-0.45px;">Show</span>
<div class="a" style="left:566px;top:476px;width:103px;height:72px;border:2.4px solid #8f8f8f;border-radius:7.5px;background:#fff"></div>
<span class="t" style="left:593.5px;top:495.8px;font-size:25.11px;line-height:35px;color:#2b2b2b;font-weight:400;letter-spacing:-1.97px;">10</span>
<svg style="left:642.4px;top:506.6px" width="19.0" height="12.0" viewBox="0 0 19 12"><path d="M1.2 1.4L9.5 9.6L17.8 1.4" fill="none" stroke="#222" stroke-width="2.2"/></svg>
<span class="t" style="left:681.7px;top:495.8px;font-size:25.11px;line-height:35px;color:#2b2b2b;font-weight:400;letter-spacing:-0.20px;">entries</span>
<div class="a" style="left:2230px;top:476px;width:262px;height:72px;border:2.2px solid #9a9a9a;border-radius:9px;background:#fff"></div>
<span class="t" style="left:2242.3px;top:495.7px;font-size:24.9px;line-height:35px;color:#7b7b7b;font-weight:400;letter-spacing:-0.48px;">Search</span>
<div class="a" style="left:2500px;top:476px;width:207px;height:72px;border:2.2px solid #97a397;border-radius:11px;background:#48a537"></div>
<svg style="left:2521.2px;top:504.6px" width="16.4" height="16.4" viewBox="0 0 16.4 16.4"><path d="M5.7 0H10.7V5.7H16.4V10.7H10.7V16.4H5.7V10.7H0V5.7H5.7Z" fill="#fff"/></svg>
<span class="t" style="left:2541.4px;top:497.4px;font-size:22.21px;line-height:31px;color:#fff;font-weight:400;letter-spacing:-0.24px;">Add asset type</span>
<div class="a" style="left:2715.5px;top:476px;width:63.5px;height:72px;border:2.2px solid #9a9a9a;border-radius:11px;background:#fff"></div>
<svg style="left:2737.0px;top:504.0px" width="20.0" height="16.0" viewBox="0 0 20 16"><rect x="0" y="0" width="20" height="16" rx="2.2" fill="#1d5cf2"/><rect x="1.3" y="4.3" width="17.4" height="10.2" rx="0.8" fill="#fff"/><path d="M2.8 5.85H4.3V7.15H2.8ZM5.9 5.85H17.2V7.15H5.9ZM2.8 8.8H4.3V10.1H2.8ZM5.9 8.8H17.2V10.1H5.9ZM2.8 11.75H4.3V13.05H2.8ZM5.9 11.75H17.2V13.05H5.9Z" fill="#1d5cf2"/><path d="M5.9 7.15H17.2V8.8H5.9ZM5.9 10.1H17.2V11.75H5.9Z" fill="#dfe6fb"/></svg>
<div class="a" style="left:493px;top:561px;width:2294px;height:2px;background:#c6ccd3"></div>
<div class="a" style="left:493px;top:638.4px;width:2294px;height:3.8px;background:linear-gradient(#a9b0b7,#c4cad0)"></div>
<span class="t" style="left:513.0px;top:582.6px;font-size:25.53px;line-height:36px;color:#7d7d7d;font-weight:400;-webkit-text-stroke:0.5px #7d7d7d;letter-spacing:-0.36px;">Asset type</span>
<span class="t" style="left:972.5px;top:582.6px;font-size:25.53px;line-height:36px;color:#7d7d7d;font-weight:400;-webkit-text-stroke:0.5px #7d7d7d;letter-spacing:-0.42px;">Created on</span>
<span class="t" style="left:1430.8px;top:582.6px;font-size:25.53px;line-height:36px;color:#7d7d7d;font-weight:400;-webkit-text-stroke:0.5px #7d7d7d;letter-spacing:-0.09px;">Inspection types</span>
<span class="t" style="left:1881.8px;top:582.6px;font-size:25.53px;line-height:36px;color:#7d7d7d;font-weight:400;-webkit-text-stroke:0.5px #7d7d7d;letter-spacing:-0.56px;">Number of assets</span>
<span class="t" style="left:2522.3px;top:582.6px;font-size:25.53px;line-height:36px;color:#7d7d7d;font-weight:400;-webkit-text-stroke:0.5px #7d7d7d;letter-spacing:-0.07px;">Action</span>
<svg style="left:915.0px;top:583.6px" width="16.0" height="33.2" viewBox="0 0 16 33.2"><path d="M8 0L16 15H0Z" fill="#ebebeb"/><path d="M0 18.6H16L8 33.2Z" fill="#ebebeb"/></svg>
<svg style="left:1373.8px;top:583.6px" width="16.0" height="33.2" viewBox="0 0 16 33.2"><path d="M8 0L16 15H0Z" fill="#a9a9a9"/><path d="M0 18.6H16L8 33.2Z" fill="#ebebeb"/></svg>
<svg style="left:1825.0px;top:583.6px" width="16.0" height="33.2" viewBox="0 0 16 33.2"><path d="M8 0L16 15H0Z" fill="#ebebeb"/><path d="M0 18.6H16L8 33.2Z" fill="#ebebeb"/></svg>
<svg style="left:2291.6px;top:583.6px" width="16.0" height="33.2" viewBox="0 0 16 33.2"><path d="M8 0L16 15H0Z" fill="#ebebeb"/><path d="M0 18.6H16L8 33.2Z" fill="#ebebeb"/></svg>
<div class="a" style="left:493px;top:642.20px;width:2294px;height:88.75px;background:#fafbfe"></div>
<div class="a" style="left:493px;top:731.00px;width:2294px;height:2px;background:#c4cad0"></div>
<span class="t" style="left:513.0px;top:669.1px;font-size:25.11px;line-height:35px;color:#2b2b2b;font-weight:400;letter-spacing:-0.38px;">asset osm</span>
<span class="t" style="left:972.5px;top:669.1px;font-size:25.11px;line-height:35px;color:#2b2b2b;font-weight:400;letter-spacing:-0.39px;">19-May-2025 04:43:21 AM</span>
<span class="t" style="left:1430.8px;top:669.1px;font-size:25.11px;line-height:35px;color:#2b2b2b;font-weight:400;">0</span>
<span class="t" style="left:1881.8px;top:669.1px;font-size:25.11px;line-height:35px;color:#2b2b2b;font-weight:400;">0</span>
<div class="a" style="left:2519.4px;top:658.40px;width:76.2px;height:56.4px;border:2.2px solid #c6c3bd;border-radius:7px;background:#1d5cf2"></div>
<svg style="left:2546.0px;top:676.0px" width="23.0" height="18.6" viewBox="0 0 23 18.6"><path d="M16.9 12V14.8Q16.9 17.6 14.1 17.6H3.8Q1 17.6 1 14.8V4.2Q1 1.4 3.8 1.4H15.2" fill="none" stroke="#fff" stroke-width="1.9" stroke-linecap="round"/><path d="M16.8 3.2L20.4 6.8L12.2 15H8.2V11.4Z" fill="#fff"/><path d="M18.2 1.8L19.7 0.3Q20.3 -0.2 20.9 0.4L22.8 2.3Q23.3 2.9 22.8 3.5L21.6 4.9Z" fill="#fff"/><path d="M9.5 11.9L11.7 14.1" fill="none" stroke="#1d5cf2" stroke-width="1.2"/></svg>
<div class="a" style="left:493px;top:732.95px;width:2294px;height:88.75px;background:#ffffff"></div>
<div class="a" style="left:493px;top:821.20px;width:2294px;height:2px;background:#c4cad0"></div>
<span class="t" style="left:513.0px;top:759.9px;font-size:25.11px;line-height:35px;color:#2b2b2b;font-weight:400;letter-spacing:-0.41px;">Asset osmosys</span>
<span class="t" style="left:972.5px;top:759.9px;font-size:25.11px;line-height:35px;color:#2b2b2b;font-weight:400;letter-spacing:-0.32px;">19-May-2025 04:58:18 AM</span>
<span class="t" style="left:1432.3px;top:759.9px;font-size:25.11px;line-height:35px;color:#2b2b2b;font-weight:400;">1</span>
<span class="t" style="left:1881.8px;top:759.9px;font-size:25.11px;line-height:35px;color:#2b2b2b;font-weight:400;">0</span>
<div class="a" style="left:2519.4px;top:749.15px;width:76.2px;height:56.4px;border:2.2px solid #c6c3bd;border-radius:7px;background:#1d5cf2"></div>
<svg style="left:2546.0px;top:766.8px" width="23.0" height="18.6" viewBox="0 0 23 18.6"><path d="M16.9 12V14.8Q16.9 17.6 14.1 17.6H3.8Q1 17.6 1 14.8V4.2Q1 1.4 3.8 1.4H15.2" fill="none" stroke="#fff" stroke-width="1.9" stroke-linecap="round"/><path d="M16.8 3.2L20.4 6.8L12.2 15H8.2V11.4Z" fill="#fff"/><path d="M18.2 1.8L19.7 0.3Q20.3 -0.2 20.9 0.4L22.8 2.3Q23.3 2.9 22.8 3.5L21.6 4.9Z" fill="#fff"/><path d="M9.5 11.9L11.7 14.1" fill="none" stroke="#1d5cf2" stroke-width="1.2"/></svg>
<div class="a" style="left:493px;top:823.70px;width:2294px;height:88.75px;background:#fafbfe"></div>
<div class="a" style="left:493px;top:911.80px;width:2294px;height:2px;background:#c4cad0"></div>
<span class="t" style="left:513.0px;top:850.6px;font-size:25.11px;line-height:35px;color:#2b2b2b;font-weight:400;letter-spacing:-2.09px;">DEFAULT</span>
<span class="t" style="left:972.5px;top:850.6px;font-size:25.11px;line-height:35px;color:#2b2b2b;font-weight:400;letter-spacing:-0.09px;">01-Jan-0001 05:53:28 AM</span>
<span class="t" style="left:1432.3px;top:850.6px;font-size:25.11px;line-height:35px;color:#2b2b2b;font-weight:400;">1</span>
<span class="t" style="left:1881.8px;top:850.6px;font-size:25.11px;line-height:35px;color:#2b2b2b;font-weight:400;">9</span>
<div class="a" style="left:2519.4px;top:839.90px;width:76.2px;height:56.4px;border:2.2px solid #c6c3bd;border-radius:7px;background:#1d5cf2"></div>
<svg style="left:2546.0px;top:857.5px" width="23.0" height="18.6" viewBox="0 0 23 18.6"><path d="M16.9 12V14.8Q16.9 17.6 14.1 17.6H3.8Q1 17.6 1 14.8V4.2Q1 1.4 3.8 1.4H15.2" fill="none" stroke="#fff" stroke-width="1.9" stroke-linecap="round"/><path d="M16.8 3.2L20.4 6.8L12.2 15H8.2V11.4Z" fill="#fff"/><path d="M18.2 1.8L19.7 0.3Q20.3 -0.2 20.9 0.4L22.8 2.3Q23.3 2.9 22.8 3.5L21.6 4.9Z" fill="#fff"/><path d="M9.5 11.9L11.7 14.1" fill="none" stroke="#1d5cf2" stroke-width="1.2"/></svg>
<div class="a" style="left:493px;top:914.45px;width:2294px;height:88.75px;background:#ffffff"></div>
<div class="a" style="left:493px;top:1002.60px;width:2294px;height:2px;background:#c4cad0"></div>
<span class="t" style="left:513.0px;top:941.4px;font-size:25.11px;line-height:35px;color:#2b2b2b;font-weight:400;letter-spacing:0.36px;">Laptop</span>
<span class="t" style="left:972.5px;top:941.4px;font-size:25.11px;line-height:35px;color:#2b2b2b;font-weight:400;letter-spacing:-0.09px;">01-Jan-0001 05:53:28 AM</span>
<span class="t" style="left:1430.8px;top:941.4px;font-size:25.11px;line-height:35px;color:#2b2b2b;font-weight:400;">0</span>
<span class="t" style="left:1881.8px;top:941.4px;font-size:25.11px;line-height:35px;color:#2b2b2b;font-weight:400;">8</span>
<div class="a" style="left:2519.4px;top:930.65px;width:76.2px;height:56.4px;border:2.2px solid #c6c3bd;border-radius:7px;background:#1d5cf2"></div>
<svg style="left:2546.0px;top:948.2px" width="23.0" height="18.6" viewBox="0 0 23 18.6"><path d="M16.9 12V14.8Q16.9 17.6 14.1 17.6H3.8Q1 17.6 1 14.8V4.2Q1 1.4 3.8 1.4H15.2" fill="none" stroke="#fff" stroke-width="1.9" stroke-linecap="round"/><path d="M16.8 3.2L20.4 6.8L12.2 15H8.2V11.4Z" fill="#fff"/><path d="M18.2 1.8L19.7 0.3Q20.3 -0.2 20.9 0.4L22.8 2.3Q23.3 2.9 22.8 3.5L21.6 4.9Z" fill="#fff"/><path d="M9.5 11.9L11.7 14.1" fill="none" stroke="#1d5cf2" stroke-width="1.2"/></svg>
<div class="a" style="left:493px;top:1005.20px;width:2294px;height:88.75px;background:#fafbfe"></div>
<div class="a" style="left:493px;top:1093.60px;width:2294px;height:2px;background:#c4cad0"></div>
<span class="t" style="left:513.0px;top:1032.1px;font-size:25.11px;line-height:35px;color:#2b2b2b;font-weight:400;letter-spacing:-0.51px;">new asset</span>
<span class="t" style="left:972.5px;top:1032.1px;font-size:25.11px;line-height:35px;color:#2b2b2b;font-weight:400;letter-spacing:-0.35px;">16-Jun-2025 05:01:25 AM</span>
<span class="t" style="left:1430.8px;top:1032.1px;font-size:25.11px;line-height:35px;color:#2b2b2b;font-weight:400;">0</span>
<span class="t" style="left:1881.8px;top:1032.1px;font-size:25.11px;line-height:35px;color:#2b2b2b;font-weight:400;">0</span>
<div class="a" style="left:2519.4px;top:1021.40px;width:76.2px;height:56.4px;border:2.2px solid #c6c3bd;border-radius:7px;background:#1d5cf2"></div>
<svg style="left:2546.0px;top:1039.0px" width="23.0" height="18.6" viewBox="0 0 23 18.6"><path d="M16.9 12V14.8Q16.9 17.6 14.1 17.6H3.8Q1 17.6 1 14.8V4.2Q1 1.4 3.8 1.4H15.2" fill="none" stroke="#fff" stroke-width="1.9" stroke-linecap="round"/><path d="M16.8 3.2L20.4 6.8L12.2 15H8.2V11.4Z" fill="#fff"/><path d="M18.2 1.8L19.7 0.3Q20.3 -0.2 20.9 0.4L22.8 2.3Q23.3 2.9 22.8 3.5L21.6 4.9Z" fill="#fff"/><path d="M9.5 11.9L11.7 14.1" fill="none" stroke="#1d5cf2" stroke-width="1.2"/></svg>
<div class="a" style="left:493px;top:1095.95px;width:2294px;height:88.75px;background:#ffffff"></div>
<div class="a" style="left:493px;top:1185.00px;width:2294px;height:2px;background:#a9a9a9"></div>
<span class="t" style="left:513.0px;top:1122.8px;font-size:25.11px;line-height:35px;color:#2b2b2b;font-weight:400;letter-spacing:0.03px;">pen</span>
<span class="t" style="left:972.5px;top:1122.8px;font-size:25.11px;line-height:35px;color:#2b2b2b;font-weight:400;letter-spacing:-0.09px;">01-Jan-0001 05:53:28 AM</span>
<span class="t" style="left:1430.8px;top:1122.8px;font-size:25.11px;line-height:35px;color:#2b2b2b;font-weight:400;">0</span>
<span class="t" style="left:1881.8px;top:1122.8px;font-size:25.11px;line-height:35px;color:#2b2b2b;font-weight:400;">5</span>
<div class="a" style="left:2519.4px;top:1112.15px;width:76.2px;height:56.4px;border:2.2px solid #c6c3bd;border-radius:7px;background:#1d5cf2"></div>
<svg style="left:2546.0px;top:1129.8px" width="23.0" height="18.6" viewBox="0 0 23 18.6"><path d="M16.9 12V14.8Q16.9 17.6 14.1 17.6H3.8Q1 17.6 1 14.8V4.2Q1 1.4 3.8 1.4H15.2" fill="none" stroke="#fff" stroke-width="1.9" stroke-linecap="round"/><path d="M16.8 3.2L20.4 6.8L12.2 15H8.2V11.4Z" fill="#fff"/><path d="M18.2 1.8L19.7 0.3Q20.3 -0.2 20.9 0.4L22.8 2.3Q23.3 2.9 22.8 3.5L21.6 4.9Z" fill="#fff"/><path d="M9.5 11.9L11.7 14.1" fill="none" stroke="#1d5cf2" stroke-width="1.2"/></svg>
<span class="t" style="left:493.4px;top:1231.1px;font-size:25.11px;line-height:35px;color:#333;font-weight:400;letter-spacing:-0.81px;">Showing 1 to 6 of 6 entries</span>
<span class="t" style="left:2299.7px;top:1230.9px;font-size:24.7px;line-height:35px;color:#666;font-weight:400;letter-spacing:-0.40px;">First</span>
<span class="t" style="left:2401.3px;top:1230.9px;font-size:24.7px;line-height:35px;color:#666;font-weight:400;letter-spacing:-0.51px;">Previous</span>
<div class="a" style="left:2523.2px;top:1217px;width:58.8px;height:61.5px;border:2.2px solid #9c9c9c;border-radius:7px;background:linear-gradient(#fcfcfc,#eeeeee)"></div>
<span class="t" style="left:2545.6px;top:1230.9px;font-size:24.7px;line-height:35px;color:#333;font-weight:400;">1</span>
<span class="t" style="left:2612.0px;top:1230.9px;font-size:24.7px;line-height:35px;color:#666;font-weight:400;letter-spacing:-0.44px;">Next</span>
<span class="t" style="left:2717.0px;top:1230.9px;font-size:24.7px;line-height:35px;color:#666;font-weight:400;letter-spacing:-0.54px;">Last</span>
<div class="a" style="left:400px;top:1700px;width:2480px;height:2px;background:#c3c9cf"></div>
<span class="t" style="left:1284.4px;top:1738.0px;font-size:20.34px;line-height:28px;color:#3a3a3a;font-weight:400;letter-spacing:-0.20px;">&#169; 2025 | All Rights Reserved. Powered by <span style="color:#5a7fc0">Osmosys</span></span>
<span class="t" style="left:2603.0px;top:1738.0px;font-size:20.34px;line-height:28px;color:#3a3a3a;font-weight:400;letter-spacing:-0.02px;">Version: 5.5.0</span>
</div>
<script>(function(){var d=window.devicePixelRatio||1;if(d>1.01&&Math.abs(window.innerWidth*d-2880)<3){var r=document.getElementById("root");r.style.transformOrigin="0 0";r.style.transform="scale("+(1/d)+")";}})();</script>
</body></html>
